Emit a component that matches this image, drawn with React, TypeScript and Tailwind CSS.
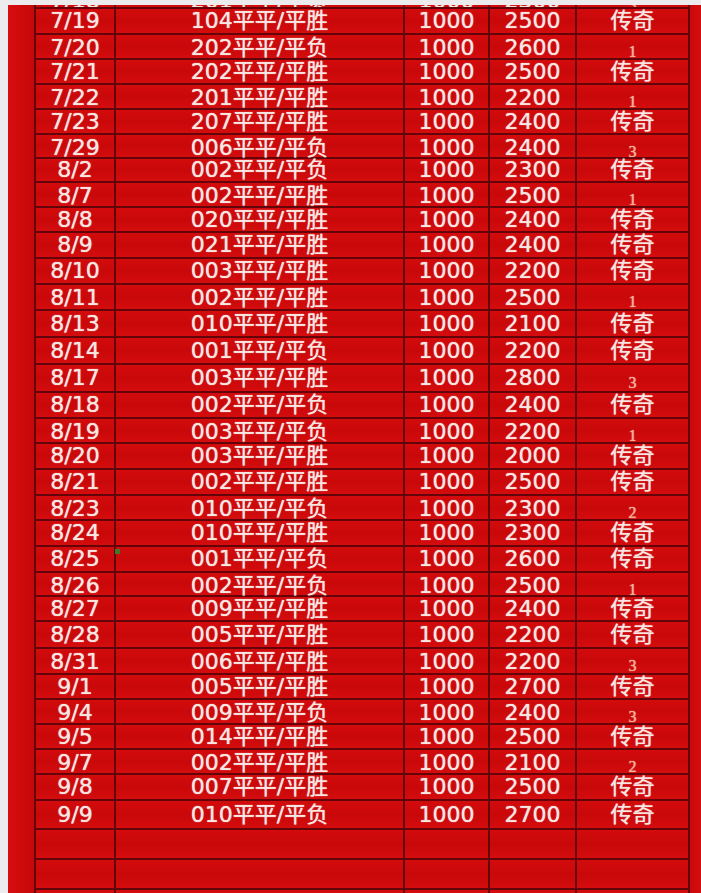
import React from "react";

type Row = [string, string, string, string, string];

const rows: Row[] = [
  ["7/18", "201平平/平负", "1000", "2300", "3"],
  ["7/19", "104平平/平胜", "1000", "2500", "传奇"],
  ["7/20", "202平平/平负", "1000", "2600", "1"],
  ["7/21", "202平平/平胜", "1000", "2500", "传奇"],
  ["7/22", "201平平/平胜", "1000", "2200", "1"],
  ["7/23", "207平平/平胜", "1000", "2400", "传奇"],
  ["7/29", "006平平/平负", "1000", "2400", "3"],
  ["8/2", "002平平/平负", "1000", "2300", "传奇"],
  ["8/7", "002平平/平胜", "1000", "2500", "1"],
  ["8/8", "020平平/平胜", "1000", "2400", "传奇"],
  ["8/9", "021平平/平胜", "1000", "2400", "传奇"],
  ["8/10", "003平平/平胜", "1000", "2200", "传奇"],
  ["8/11", "002平平/平胜", "1000", "2500", "1"],
  ["8/13", "010平平/平胜", "1000", "2100", "传奇"],
  ["8/14", "001平平/平负", "1000", "2200", "传奇"],
  ["8/17", "003平平/平胜", "1000", "2800", "3"],
  ["8/18", "002平平/平负", "1000", "2400", "传奇"],
  ["8/19", "003平平/平负", "1000", "2200", "1"],
  ["8/20", "003平平/平胜", "1000", "2000", "传奇"],
  ["8/21", "002平平/平胜", "1000", "2500", "传奇"],
  ["8/23", "010平平/平负", "1000", "2300", "2"],
  ["8/24", "010平平/平胜", "1000", "2300", "传奇"],
  ["8/25", "001平平/平负", "1000", "2600", "传奇"],
  ["8/26", "002平平/平负", "1000", "2500", "1"],
  ["8/27", "009平平/平胜", "1000", "2400", "传奇"],
  ["8/28", "005平平/平胜", "1000", "2200", "传奇"],
  ["8/31", "006平平/平胜", "1000", "2200", "3"],
  ["9/1", "005平平/平胜", "1000", "2700", "传奇"],
  ["9/4", "009平平/平负", "1000", "2400", "3"],
  ["9/5", "014平平/平胜", "1000", "2500", "传奇"],
  ["9/7", "002平平/平胜", "1000", "2100", "2"],
  ["9/8", "007平平/平胜", "1000", "2500", "传奇"],
  ["9/9", "010平平/平负", "1000", "2700", "传奇"],
  ["", "", "", "", ""],
  ["", "", "", "", ""],
  ["", "", "", "", ""],
];

// row heights as measured off the sheet (they drift a little row to row)
const heights = [
  26, 26, 25, 25, 25, 25, 24, 24, 25, 25, 26, 26, 26, 27, 27, 28, 26, 25, 26,
  26, 25, 26, 26, 24, 25, 27, 26, 25, 25, 25, 25, 26, 29, 30, 30, 30,
];

const cell =
  "flex items-center justify-center border-r-2 border-[#62040a] whitespace-nowrap";

function Result({ value }: { value: string }) {
  if (value === "传奇" || value === "") {
    return <span>{value}</span>;
  }
  return (
    <span className="pt-[9px] text-[16px] leading-none text-[#f6ad8e] [font-family:'Liberation_Serif',serif]">
      {value}
    </span>
  );
}

export default function App() {
  return (
    <div className="h-[893px] w-[701px] overflow-hidden bg-[#ecebee] pl-[8px] pt-[5px]">
      <div className="flex h-full bg-[#cf0a0b]">
        <div className="w-[28px] shrink-0 border-r-2 border-[#62040a] bg-gradient-to-r from-[#d80d0e] via-[#cf0a0b] to-[#c5080a]" />

        <div className="relative w-[652px] shrink-0 overflow-hidden">
          <div className="-mt-[22px] text-[22px] text-[#f9e6e2] [font-family:'DejaVu_Sans','Noto_Sans_CJK_SC',sans-serif] [text-shadow:0_0_1px_#fbe9e6]">
            {rows.map((r, i) => (
              <div
                key={i}
                className={`grid grid-cols-[80px_289px_85px_87px_111px] border-b-2 border-[#62040a] bg-gradient-to-b from-[#d30b0c] via-[#c9080a] to-[#d40c0d] leading-none ${
                  i === 0 ? "overflow-hidden pt-[5px]" : ""
                }`}
                style={{ height: heights[i] }}
              >
                <div className={cell}>{r[0]}</div>
                <div className={cell}>{r[1]}</div>
                <div className={cell}>{r[2]}</div>
                <div className={cell}>{r[3]}</div>
                <div className="flex items-center justify-center whitespace-nowrap">
                  <Result value={r[4]} />
                </div>
              </div>
            ))}
          </div>
          <div className="absolute left-[79px] top-[544px] h-[5px] w-[5px] bg-[#3f7a2a]" />
        </div>

        <div className="flex-1 border-l-2 border-[#62040a] bg-gradient-to-r from-[#c9090a] to-[#d60d0e]" />
      </div>
    </div>
  );
}
